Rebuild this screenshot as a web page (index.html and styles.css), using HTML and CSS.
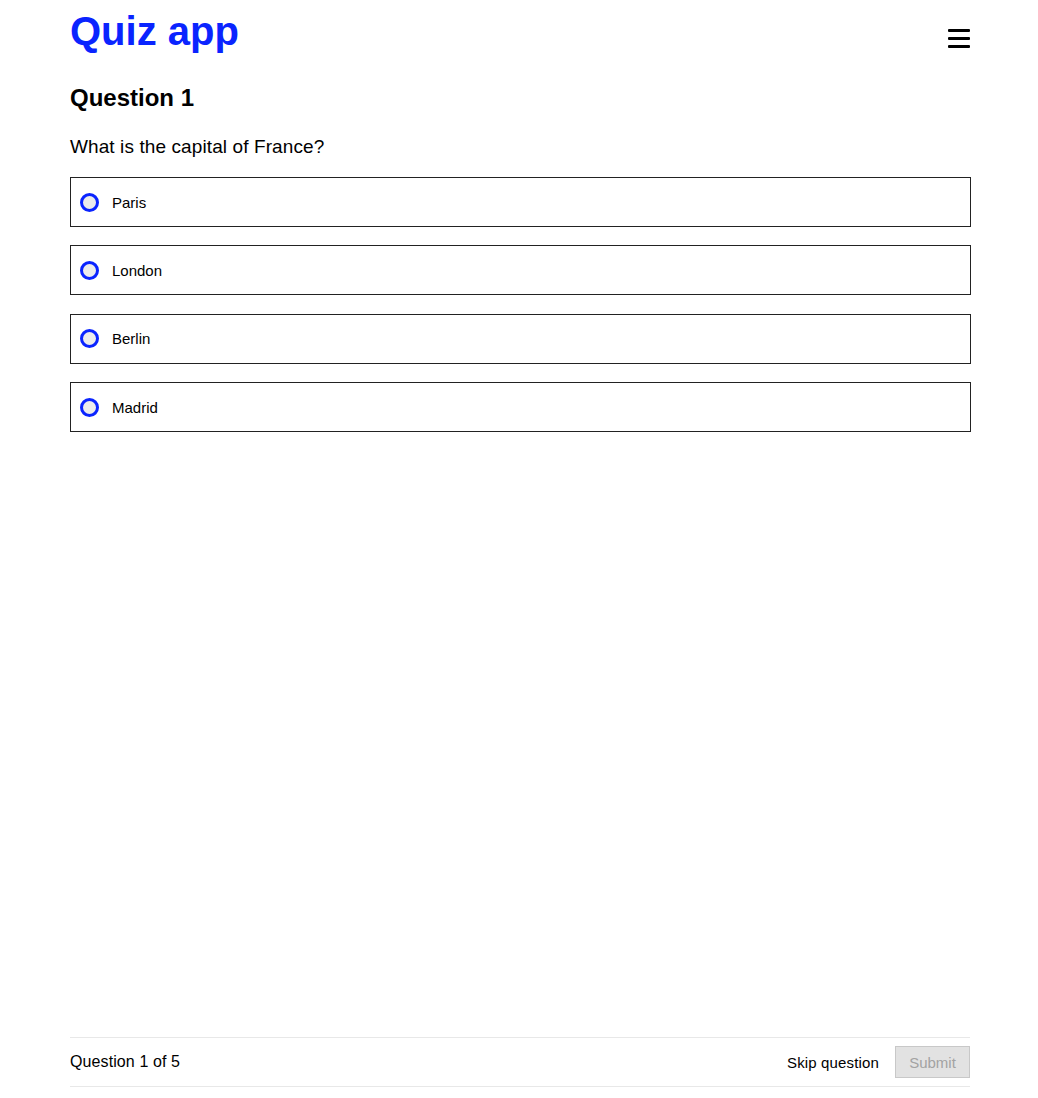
FILE: index.html
```html
<!DOCTYPE html>
<html lang="en">
<head>
<meta charset="utf-8">
<title>Quiz app</title>
<link rel="stylesheet" href="styles.css">
</head>
<body>
<div class="page">
  <header class="header">
    <h1 class="logo">Quiz app</h1>
    <button class="menu" aria-label="Menu">
      <span class="bar"></span><span class="bar"></span><span class="bar"></span>
    </button>
  </header>
  <main class="main">
    <h2 class="qtitle">Question 1</h2>
    <p class="qtext">What is the capital of France?</p>
    <div class="options">
      <label class="option"><span class="radio"></span><span class="label">Paris</span></label>
      <label class="option"><span class="radio"></span><span class="label">London</span></label>
      <label class="option"><span class="radio"></span><span class="label">Berlin</span></label>
      <label class="option"><span class="radio"></span><span class="label">Madrid</span></label>
    </div>
  </main>
  <footer class="footer">
    <span class="progress">Question 1 of 5</span>
    <div class="actions">
      <button class="skip">Skip question</button>
      <button class="submit" disabled>Submit</button>
    </div>
  </footer>
</div>
</body>
</html>
```
FILE: styles.css
```css
* { box-sizing: border-box; }
html, body { margin: 0; padding: 0; }
body {
  font-family: "Liberation Sans", Arial, Helvetica, sans-serif;
  color: #000;
  background: #fff;
}
.page {
  width: 901px;
  margin: 0 0 0 70px;
  min-height: 100vh;
  padding-bottom: 11px;
  display: flex;
  flex-direction: column;
}
.header {
  display: flex;
  justify-content: space-between;
  align-items: flex-start;
  padding-top: 8px;
}
.logo {
  margin: 0;
  font-size: 40px;
  line-height: 46px;
  font-weight: 700;
  color: #0a24ff;
}
.menu {
  margin-top: 21px;
  margin-right: 1px;
  width: 22px;
  height: 19px;
  padding: 0;
  border: 0;
  background: none;
  display: flex;
  flex-direction: column;
  justify-content: space-between;
}
.bar {
  display: block;
  width: 22px;
  height: 3px;
  background: #000;
  border-radius: 1px;
}
.main { display: flex; flex-direction: column; }
.qtitle {
  margin: 30px 0 0;
  font-size: 24px;
  line-height: 28px;
  font-weight: 700;
}
.qtext {
  margin: 24px 0 0;
  font-size: 19px;
  line-height: 22px;
  letter-spacing: 0.1px;
}
.options {
  margin-top: 19px;
  display: flex;
  flex-direction: column;
  gap: 18.4px;
}
.option {
  height: 50px;
  border: 1px solid #222;
  display: flex;
  align-items: center;
  padding-left: 9px;
  gap: 13px;
  font-size: 15px;
}
.radio {
  width: 19px;
  height: 19px;
  border-radius: 50%;
  border: 3px solid #0a24ff;
  background: #ececec;
  flex: none;
}
.footer {
  margin-top: auto;
  margin-right: 1px;
  height: 50px;
  border-top: 1px solid #e8e8e8;
  border-bottom: 1px solid #e8e8e8;
  display: flex;
  align-items: center;
  justify-content: space-between;
  font-size: 16px;
}
.progress { letter-spacing: 0.1px; }
.actions { display: flex; align-items: center; gap: 16px; }
.skip {
  font-family: inherit;
  font-size: 15px;
  letter-spacing: 0.15px;
  border: 0;
  background: none;
  padding: 0;
  color: #000;
}
.submit {
  font-family: inherit;
  font-size: 15px;
  width: 75px;
  height: 32px;
  background: #e2e2e2;
  border: 1px solid #c8c8c8;
  color: #a3a3a3;
  padding: 0;
}
```
